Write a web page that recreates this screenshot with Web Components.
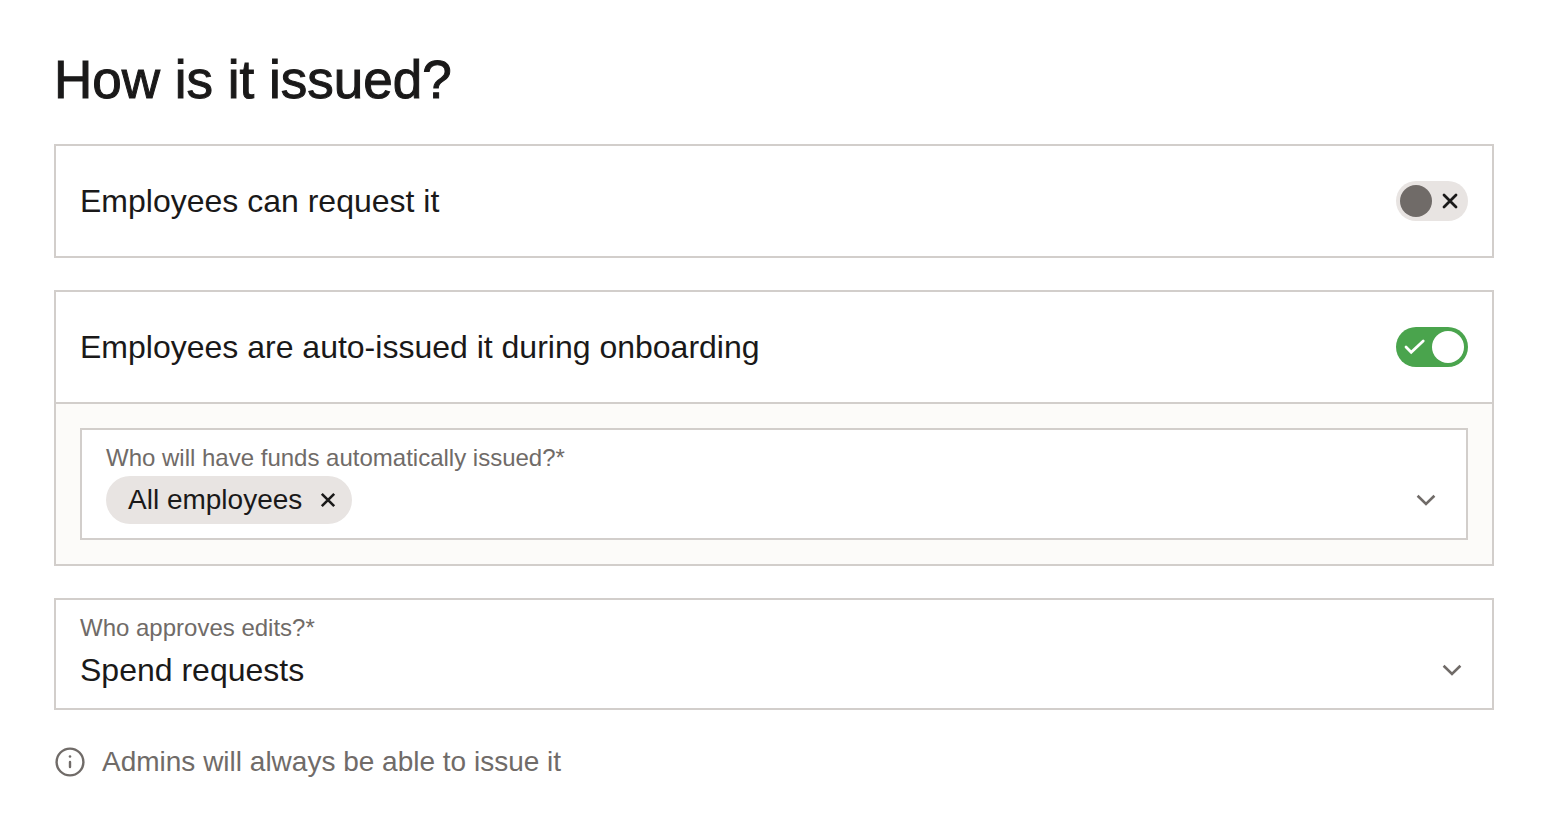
<!DOCTYPE html>
<html lang="en">
<head>
<meta charset="utf-8">
<meta name="viewport" content="width=device-width, initial-scale=1">
<title>How is it issued?</title>
<style>
	:root {
		--ink: #1a1919;
		--muted: #706b68;
		--line: #d2cecb;
		--fill: #e8e4e2;
		--wash: #fcfbf9;
		--green: #4aa44d;
	}
	body {
		margin: 0;
		background: #fff;
		color: var(--ink);
		font-family: "Liberation Sans", Arial, sans-serif;
		font-size: 32px;
		line-height: 40px;
	}
</style>
</head>
<body>

<issue-form heading="How is it issued?">
	<toggle-card label="Employees can request it"></toggle-card>

	<toggle-card label="Employees are auto-issued it during onboarding" checked>
		<chip-field label="Who will have funds automatically issued?*">
			<filter-chip>All employees</filter-chip>
		</chip-field>
	</toggle-card>

	<select-field label="Who approves edits?*">
		<option>Spend requests</option>
		<option>Managers</option>
	</select-field>

	<info-note>Admins will always be able to issue it</info-note>
</issue-form>

<script>
const chevron = `
	<svg class="chevron" width="32" height="32" viewBox="0 0 32 32" aria-hidden="true">
		<path d="M7.6 11.8 16 20l8.4-8.2" fill="none" stroke="currentColor" stroke-width="2.6"/>
	</svg>
`;

// shared by both kinds of field
const fieldCss = `
	:host {
		display: block;
		box-sizing: border-box;
		padding: 12px 24px 14px;
		border: 2px solid var(--line);
		background: #fff;
	}
	label {
		display: block;
		margin-bottom: 2px;
		color: var(--muted);
		font-size: 24px;
		line-height: 32px;
	}
	.chevron {
		color: var(--muted);
		pointer-events: none;
	}
`;

window.customElements.define('issue-form', class extends HTMLElement {

	constructor(){
		super();

		this.attachShadow({mode: 'open'});
		this.render();
	}

	render(){
		this.shadowRoot.innerHTML = `
			<style>
				:host {
					display: block;
					padding: 48px 68px 32px 54px;
				}
				h1 {
					margin: 0 0 32px;
					font-size: 53px;
					font-weight: 400;
					line-height: 64px;
					-webkit-text-stroke: 1px currentColor;
				}
				form {
					display: flex;
					flex-direction: column;
					gap: 32px;
				}
			</style>
			<h1>${this.getAttribute('heading')}</h1>
			<form><slot></slot></form>
		`;
	}
});

window.customElements.define('toggle-card', class extends HTMLElement {

	constructor(){
		super();

		this.attachShadow({mode: 'open'});
		this.render();
	}

	render(){
		this.shadowRoot.innerHTML = `
			<style>
				:host {
					display: block;
					border: 2px solid var(--line);
				}
				.row {
					display: flex;
					align-items: center;
					gap: 24px;
					padding: 35px 24px;
				}
				label {
					flex: 1;
				}
				.switch {
					display: grid;
					grid-template-columns: 36px 36px;
					align-items: center;
					justify-items: center;
				}
				input {
					grid-area: 1 / 1 / 2 / 3;
					appearance: none;
					display: flex;
					box-sizing: border-box;
					width: 72px;
					height: 40px;
					margin: 0;
					padding: 4px;
					border-radius: 20px;
					background: var(--fill);
					cursor: pointer;
				}
				input::before {
					content: "";
					width: 32px;
					height: 32px;
					border-radius: 50%;
					background: var(--muted);
				}
				input:checked {
					justify-content: flex-end;
					background: var(--green);
				}
				input:checked::before {
					background: #fff;
				}
				svg {
					fill: none;
					stroke-linecap: round;
					pointer-events: none;
				}
				.on {
					grid-area: 1 / 1;
					stroke: #fff;
					visibility: hidden;
				}
				.off {
					grid-area: 1 / 2;
					stroke: var(--ink);
				}
				input:checked ~ .on {
					visibility: visible;
				}
				input:checked ~ .off {
					visibility: hidden;
				}
				.body {
					padding: 24px;
					border-top: 2px solid var(--line);
					background: var(--wash);
				}
				.body[hidden] {
					display: none;
				}
			</style>
			<div class="row">
				<label for="toggle">${this.getAttribute('label')}</label>
				<span class="switch">
					<input type="checkbox" role="switch" id="toggle">
					<svg class="on" width="24" height="24" viewBox="0 0 24 24" stroke-width="2.8" aria-hidden="true"><path d="m4 12 5.2 5.2L21.2 6"/></svg>
					<svg class="off" width="24" height="24" viewBox="0 0 24 24" stroke-width="2.8" aria-hidden="true"><path d="m6 6 12 12M18 6 6 18"/></svg>
				</span>
			</div>
			<div class="body"><slot></slot></div>
		`;

		const input = this.shadowRoot.querySelector('input');
		input.checked = this.hasAttribute('checked');
		input.addEventListener('change', ()=>this.toggleBody());
		this.toggleBody();
	}

	toggleBody(){
		const input = this.shadowRoot.querySelector('input');
		this.shadowRoot.querySelector('.body').hidden = !input.checked || !this.children.length;
	}
});

window.customElements.define('chip-field', class extends HTMLElement {

	constructor(){
		super();

		this.attachShadow({mode: 'open'});
		this.render();
	}

	render(){
		this.shadowRoot.innerHTML = `
			<style>
				${fieldCss}
				.value {
					display: flex;
					align-items: center;
					gap: 8px;
				}
				input {
					flex: 1;
					min-width: 0;
					height: 48px;
					box-sizing: border-box;
					padding: 0;
					border: 0;
					outline: 0;
					background: none;
					color: inherit;
					font: inherit;
				}
			</style>
			<label for="people">${this.getAttribute('label')}</label>
			<div class="value">
				<slot></slot>
				<input id="people" type="text" role="combobox" aria-expanded="false" autocomplete="off">
				${chevron}
			</div>
		`;
	}
});

window.customElements.define('filter-chip', class extends HTMLElement {

	constructor(){
		super();

		this.attachShadow({mode: 'open'});
		this.render();
	}

	render(){
		this.shadowRoot.innerHTML = `
			<style>
				:host {
					display: flex;
					align-items: center;
					gap: 14px;
					padding: 0 12px 0 22px;
					border-radius: 24px;
					background: var(--fill);
					font-size: 28px;
					line-height: 48px;
				}
				button {
					display: flex;
					padding: 0;
					border: 0;
					background: none;
					color: inherit;
					cursor: pointer;
				}
			</style>
			<span><slot></slot></span>
			<button type="button" aria-label="Remove">
				<svg width="24" height="24" viewBox="0 0 24 24" fill="none" stroke="currentColor" stroke-width="2.6" aria-hidden="true"><path d="m5.8 5.8 12.4 12.4M18.2 5.8 5.8 18.2"/></svg>
			</button>
		`;

		this.shadowRoot.querySelector('button').addEventListener('click', ()=>this.remove());
	}
});

window.customElements.define('select-field', class extends HTMLElement {

	constructor(){
		super();

		this.attachShadow({mode: 'open'});
		this.render();
	}

	render(){
		this.shadowRoot.innerHTML = `
			<style>
				${fieldCss}
				.value {
					display: grid;
					align-items: center;
				}
				select, .chevron {
					grid-area: 1 / 1;
				}
				.chevron {
					justify-self: end;
				}
				select {
					appearance: none;
					width: 100%;
					height: 48px;
					padding: 0;
					border: 0;
					outline: 0;
					background: none;
					color: inherit;
					font: inherit;
				}
			</style>
			<label for="choice">${this.getAttribute('label')}</label>
			<div class="value">
				<select id="choice"></select>
				${chevron}
			</div>
		`;

		// options can't be slotted into a select, so they are moved in
		this.shadowRoot.querySelector('select').append(...this.querySelectorAll('option'));
	}
});

window.customElements.define('info-note', class extends HTMLElement {

	constructor(){
		super();

		this.attachShadow({mode: 'open'});
		this.render();
	}

	render(){
		this.shadowRoot.innerHTML = `
			<style>
				:host {
					display: flex;
					align-items: center;
					gap: 16px;
					color: var(--muted);
					font-size: 28px;
				}
				svg {
					flex: none;
				}
			</style>
			<svg width="32" height="32" viewBox="0 0 32 32" fill="none" stroke="currentColor" stroke-width="2.4" aria-hidden="true">
				<circle cx="16" cy="16" r="13.4"/>
				<path d="M16 16v5" stroke-linecap="round"/>
				<circle cx="16" cy="10.5" r="1.3" fill="currentColor" stroke="none"/>
			</svg>
			<span><slot></slot></span>
		`;
	}
});
</script>
</body>
</html>
